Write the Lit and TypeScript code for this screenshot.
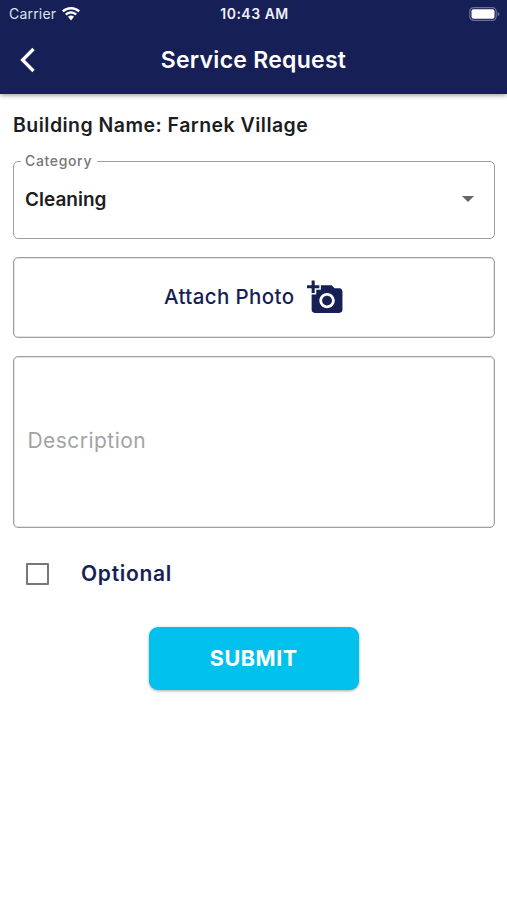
import { LitElement, html, css } from "lit";
import { customElement } from "lit/decorators.js";

@customElement("app-root")
export class AppRoot extends LitElement {
  static styles = css`
    :host {
      display: block;
      box-sizing: border-box;
      height: 900px;
      background: #fff;
      color: #1d1d1f;
      font-family: Inter, "Open Sans", sans-serif;
      overflow: hidden;
    }
    *, *::before { box-sizing: border-box; }
    svg { display: block; flex: none; }
    .top {
      height: 94px;
      background: #171f57;
      color: #fff;
      box-shadow: 0 1px 5px rgba(0, 0, 0, 0.45);
    }
    .status {
      display: grid;
      grid-template-columns: 1fr auto 1fr;
      align-items: center;
      height: 27px;
      padding: 0 7px 0 9px;
    }
    .carrier { display: flex; align-items: center; gap: 6px; font-size: 14px; color: #dfe1f0; letter-spacing: 0.2px; }
    .time { font-size: 14px; font-weight: 600; letter-spacing: 0.5px; color: #eef0fb; }
    .battery { justify-self: end; }
    .bar {
      display: grid;
      grid-template-columns: 40px 1fr 40px;
      align-items: center;
      height: 66px;
      padding: 0 8px;
    }
    .back { padding: 0; border: 0; background: none; color: #fff; }
    h1 { margin: 0; text-align: center; font-size: 23px; font-weight: 600; line-height: 28px; letter-spacing: 0.27px; }
    main { padding: 17px 12.5px 0 13px; }
    .building { margin: 0; font-size: 19.5px; line-height: 28px; font-weight: 600; letter-spacing: 0.47px; }
    .field {
      margin: 0;
      min-width: 0;
      border: 1px solid #a0a0a0;
      border-radius: 5px;
      padding: 0;
      box-shadow: inset 0 0 0 0.5px #c8c8c8;
    }
    .select { height: 86px; margin-top: 14px; padding: 0 18px 0 11px; box-shadow: none; }
    legend { margin-left: -4px; padding: 0 5px 0 4px; font-size: 14px; line-height: 16px; font-weight: 500; letter-spacing: 0.65px; color: #777; }
    .value { display: flex; justify-content: space-between; align-items: center; height: 60px; font-size: 19px; font-weight: 600; }
    .attach {
      display: flex;
      align-items: center;
      justify-content: center;
      gap: 13px;
      width: 100%;
      height: 81px;
      margin-top: 18px;
      padding-left: 1px;
      background: #fff;
      font: 500 20.5px Inter, sans-serif;
      letter-spacing: 0.38px;
      color: #171f57;
    }
    .attach span { padding-bottom: 2px; }
    .description {
      display: block;
      width: 100%;
      height: 172px;
      margin-top: 18px;
      padding: 0 13.5px 4px;
      font: 400 21px Inter, sans-serif;
      letter-spacing: 0.45px;
      outline: none;
    }
    .description::placeholder { color: #a3a3a3; opacity: 1; }
    .optional { display: flex; align-items: center; gap: 32px; height: 28px; margin: 32px 0 0 13px; font-size: 21px; font-weight: 600; letter-spacing: 0.7px; color: #171f57; }
    .optional span { padding-bottom: 2px; }
    .box { width: 23px; height: 22px; margin: 0; appearance: none; border: 2px solid #777; border-radius: 1px; }
    .submit {
      display: block;
      width: 210px;
      height: 63px;
      margin: 39px auto 0;
      padding: 0 0 2px;
      border: 0;
      border-radius: 9px;
      background: #00c1ed;
      color: #fff;
      font: 700 21.5px Inter, sans-serif;
      letter-spacing: 0.6px;
      box-shadow: 0 1px 3px rgba(0, 0, 0, 0.35);
    }
  `;

  render() {
    return html`
      <header class="top">
        <div class="status">
          <div class="carrier">
            <span class="carrier-name">Carrier</span>
            <svg width="18" height="14" viewBox="0 0 18 14" fill="#fff">
              <path d="M9 0C5.5 0 2.3 1.4 0 3.6L1.7 5.3C3.6 3.5 6.200 2.400 9 2.400s5.400 1.100 7.300 2.900L18 3.600C15.700 1.400 12.500 0 9 0z" />
              <path d="M9 4.300c-2.300 0-4.400.9-6 2.400l1.700 1.700C5.800 7.300 7.300 6.700 9 6.700s3.200.6 4.300 1.700L15 6.700c-1.600-1.500-3.700-2.400-6-2.400z" />
              <path d="M9 8.600c-1.200 0-2.200.4-3 1.200l3 3.700 3-3.700c-.8-.8-1.800-1.200-3-1.200z" />
            </svg>
          </div>
          <span class="time">10:43 AM</span>
          <svg class="battery" width="31" height="14" viewBox="0 0 31 14">
            <rect x="0.800" y="0.600" width="26.400" height="12.800" rx="4" fill="none" stroke="#6b6f98" stroke-width="1.200" />
            <rect x="2.500" y="2.200" width="23" height="9.600" rx="2" fill="#fff" />
            <path d="M28.600 4.700c1.200.5 1.800 1.300 1.800 2.300s-.6 1.800-1.800 2.300z" fill="#6b6f98" />
          </svg>
        </div>
        <div class="bar">
          <button class="back" aria-label="Back">
            <svg width="32" height="28" viewBox="0 0 32 28" fill="none" stroke="currentColor" stroke-width="3.300">
              <path d="M25.500 3L14.600 14l10.900 11" />
            </svg>
          </button>
          <h1>Service Request</h1>
        </div>
      </header>
      <main>
        <p class="building"><span>Building Name: Farnek Village</span></p>
        <fieldset class="field select">
          <legend>Category</legend>
          <div class="value">
            <span>Cleaning</span>
            <svg width="16" height="8" viewBox="0 0 16 8"><path d="M2 1h12L8 7z" fill="#666" /></svg>
          </div>
        </fieldset>
        <button class="field attach">
          <span>Attach Photo</span>
          <svg width="37" height="37" viewBox="0 0 24 24" fill="currentColor">
            <path d="M3 4V1h2v3h3v2H5v3H3V6H0V4h3zm3 6V7h3V4h7l1.830 2H21c1.100 0 2 .9 2 2v12c0 1.100-.9 2-2 2H5c-1.100 0-2-.9-2-2V10h3zm7 9c2.760 0 5-2.240 5-5s-2.240-5-5-5-5 2.240-5 5 2.240 5 5 5zm-3.200-5c0 1.770 1.430 3.200 3.200 3.200s3.200-1.430 3.200-3.200-1.430-3.200-3.200-3.200-3.200 1.430-3.200 3.200z" />
          </svg>
        </button>
        <input class="field description" placeholder="Description" />
        <label class="optional"><input class="box" type="checkbox" /><span>Optional</span></label>
        <button class="submit">SUBMIT</button>
      </main>
    `;
  }
}
